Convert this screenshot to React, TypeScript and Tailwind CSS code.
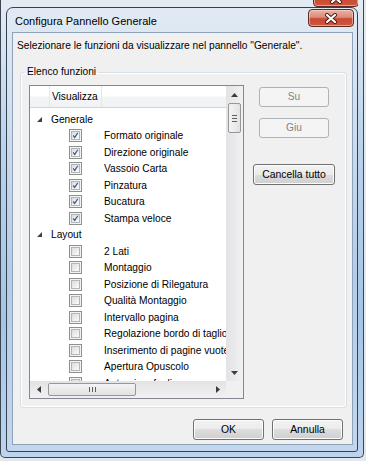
import React from 'react';

// One row of the feature tree: either a category header or a checkbox item.
type Row = { label: string; category?: boolean; checked?: boolean };

const rows: Row[] = [
  { label: 'Generale', category: true },
  { label: 'Formato originale', checked: true },
  { label: 'Direzione originale', checked: true },
  { label: 'Vassoio Carta', checked: true },
  { label: 'Pinzatura', checked: true },
  { label: 'Bucatura', checked: true },
  { label: 'Stampa veloce', checked: true },
  { label: 'Layout', category: true },
  { label: '2 Lati' },
  { label: 'Montaggio' },
  { label: 'Posizione di Rilegatura' },
  { label: 'Qualità Montaggio' },
  { label: 'Intervallo pagina' },
  { label: 'Regolazione bordo di taglio' },
  { label: 'Inserimento di pagine vuote' },
  { label: 'Apertura Opuscolo' },
  { label: 'Anteprima fogli' },
];

const CloseButton = () => (
  <div className="w-[46px] h-[18px] shrink-0 rounded-[4px] border border-[#5b2a24] bg-[linear-gradient(to_bottom,#eab3a6_0%,#dc8c79_45%,#c84a32_55%,#d0573b_100%)] shadow-[inset_0_0_0_1px_rgba(255,220,210,0.55)] flex items-center justify-center">
    <svg width="14" height="11" viewBox="0 0 14 11">
      <path d="M3 2 L11 9 M11 2 L3 9" stroke="#4a1a14" strokeWidth="4" strokeLinecap="round" />
      <path d="M3 2 L11 9 M11 2 L3 9" stroke="#ffffff" strokeWidth="2.2" strokeLinecap="round" />
    </svg>
  </div>
);

const Checkbox = ({ checked }: { checked?: boolean }) => (
  <div className="w-[13px] h-[13px] border border-[#8f8f8f] bg-[#f4f4f4] p-[1px]">
    <div className="w-full h-full border border-[#b5b5b5] bg-[linear-gradient(135deg,#dcdcdc,#fbfbfb)] flex items-center justify-center">
      {checked && (
        <svg width="9" height="9" viewBox="0 0 9 9">
          <path d="M1.5 4.5 L3.5 7 L7.5 1" stroke="#3d5a9c" strokeWidth="1.6" fill="none" />
        </svg>
      )}
    </div>
  </div>
);

const WinButton = ({ label, disabled, className }: { label: string; disabled?: boolean; className: string }) => (
  <div
    className={
      disabled
        ? `${className} rounded-[3px] border border-[#adb2b5] bg-[#f4f4f4] text-[#838383] flex items-center justify-center`
        : `${className} rounded-[3px] border border-[#707070] bg-[linear-gradient(to_bottom,#f2f2f2_0%,#ebebeb_50%,#dddddd_50%,#cfcfcf_100%)] shadow-[inset_0_0_0_1px_#fcfcfc] text-black flex items-center justify-center`
    }
  >
    {label}
  </div>
);

const Arrow = ({ dir }: { dir: 'up' | 'down' | 'left' | 'right' }) => {
  const d = {
    up: 'M0 4 L3.5 0 L7 4 Z',
    down: 'M0 0 L3.5 4 L7 0 Z',
    left: 'M4 0 L0 3.5 L4 7 Z',
    right: 'M0 0 L4 3.5 L0 7 Z',
  }[dir];
  const vertical = dir === 'up' || dir === 'down';
  return (
    <svg width={vertical ? 7 : 4} height={vertical ? 4 : 7} viewBox={vertical ? '0 0 7 4' : '0 0 4 7'}>
      <path d={d} fill="#3c3c3c" />
    </svg>
  );
};

export default function App() {
  return (
    <div className="w-[366px] h-[461px] bg-[#e2e8ee] overflow-hidden font-['Liberation_Sans',Arial,sans-serif] text-[10.2px] text-black">
      {/* window behind the dialog */}
      <div className="w-[364px] h-[458px] border-x border-b border-[#3b4654] rounded-b-[5px] bg-[linear-gradient(to_bottom,#e4ebf3_0%,#bcd3eb_30%,#a6c4e5_70%,#bcd4ee_100%)] px-[5px] pb-[5px]">
        <div className="h-[7px] flex justify-end overflow-hidden items-end">
          <div className="mr-[-1px]">
            <CloseButton />
          </div>
        </div>

        {/* dialog */}
        <div className="w-[352px] h-[445px] border border-[#36414f] rounded-t-[7px] rounded-b-[3px] bg-[linear-gradient(to_bottom,#e1eaf4_0%,#cfdeee_25%,#b3cce8_60%,#c2d7ed_100%)] flex flex-col">
          {/* title bar */}
          <div className="h-[24px] flex justify-between items-start">
            <div className="pl-[8px] pt-[7px] text-[11px] leading-[13px] text-black">Configura Pannello Generale</div>
            <div className="mt-[1px] mr-[3px]">
              <CloseButton />
            </div>
          </div>

          {/* client area */}
          <div className="ml-[5px] w-[341px] h-[413px] border border-[#8ea3b9] bg-[#f0f0f0] flex flex-col">
            <div className="pl-[4px] pt-[6px] leading-[14px]">
              Selezionare le funzioni da visualizzare nel pannello "Generale".
            </div>

            <fieldset className="mt-[12px] ml-[7px] w-[327px] h-[343px] border border-[#d5dfe5] rounded-[3px] shadow-[inset_0_0_0_1px_#ffffff]">
              <legend className="ml-[3px] px-[3px] leading-[14px]">Elenco funzioni</legend>
              <div className="flex">
                {/* list box */}
                <div className="ml-[8px] mt-[6px] w-[215px] h-[314px] border border-[#828790] bg-white flex flex-col">
                  <div className="flex h-[295px]">
                    <div className="w-[196px] overflow-hidden flex flex-col">
                      <div className="h-[22px] shrink-0 flex border-b border-[#d5d5d5] bg-[linear-gradient(to_bottom,#ffffff_0%,#ffffff_45%,#f3f4f6_55%,#f1f2f4_100%)]">
                        <div className="w-[20px] border-r border-[#e3e8ee]" />
                        <div className="w-[52px] border-r border-[#e3e8ee] pl-[2px] flex items-center">Visualizza</div>
                      </div>
                      <div className="pt-[3px] flex flex-col">
                        {rows.map((r, i) => (
                          <div key={i} className="h-[16.5px] shrink-0 flex items-center whitespace-nowrap">
                            {r.category ? (
                              <>
                                <div className="w-[21px] shrink-0 pl-[7px] flex items-center">
                                  <svg width="5" height="5" viewBox="0 0 5 5">
                                    <path d="M5 0 L5 5 L0 5 Z" fill="#404040" />
                                  </svg>
                                </div>
                                <span>{r.label}</span>
                              </>
                            ) : (
                              <>
                                <div className="w-[74px] shrink-0 pl-[39px]">
                                  <Checkbox checked={r.checked} />
                                </div>
                                <span className="shrink-0">{r.label}</span>
                              </>
                            )}
                          </div>
                        ))}
                      </div>
                    </div>
                    {/* vertical scrollbar */}
                    <div className="w-[17px] bg-[linear-gradient(to_right,#e3e3e6,#f1f1f3)] flex flex-col items-center">
                      <div className="h-[17px] flex items-center justify-center">
                        <Arrow dir="up" />
                      </div>
                      <div className="w-[13px] h-[30px] rounded-[2px] border border-[#979797] bg-[linear-gradient(to_right,#f4f4f4,#e2e2e2)] flex flex-col items-center justify-center gap-[2px]">
                        <div className="w-[5px] h-px bg-[#5f5f5f]" />
                        <div className="w-[5px] h-px bg-[#5f5f5f]" />
                        <div className="w-[5px] h-px bg-[#5f5f5f]" />
                      </div>
                      <div className="flex-1" />
                      <div className="h-[17px] flex items-center justify-center">
                        <Arrow dir="down" />
                      </div>
                    </div>
                  </div>
                  <div className="flex h-[17px]">
                    {/* horizontal scrollbar */}
                    <div className="w-[196px] bg-[linear-gradient(to_bottom,#e3e3e6,#f1f1f3)] flex items-center">
                      <div className="w-[17px] flex justify-center">
                        <Arrow dir="left" />
                      </div>
                      <div className="ml-[1px] w-[88px] h-[13px] rounded-[2px] border border-[#979797] bg-[linear-gradient(to_bottom,#f4f4f4,#e2e2e2)] flex items-center justify-center gap-[2px]">
                        <div className="w-px h-[5px] bg-[#5f5f5f]" />
                        <div className="w-px h-[5px] bg-[#5f5f5f]" />
                        <div className="w-px h-[5px] bg-[#5f5f5f]" />
                      </div>
                      <div className="flex-1" />
                      <div className="w-[17px] flex justify-center">
                        <Arrow dir="right" />
                      </div>
                    </div>
                    <div className="w-[17px] bg-[#f0f0f0]" />
                  </div>
                </div>

                {/* side buttons */}
                <div className="flex-1 flex flex-col items-center pt-[8px] pr-[2px]">
                  <WinButton label="Su" disabled className="w-[70px] h-[20px]" />
                  <WinButton label="Giu" disabled className="mt-[11px] w-[70px] h-[20px]" />
                  <WinButton label="Cancella tutto" className="mt-[26px] w-[82px] h-[21px] text-[10.4px]" />
                </div>
              </div>
            </fieldset>

            <div className="mt-[11px] mr-[9px] flex justify-end gap-[8px] text-[10.4px]">
              <WinButton label="OK" className="w-[71px] h-[21px]" />
              <WinButton label="Annulla" className="w-[71px] h-[21px]" />
            </div>
          </div>
        </div>
      </div>
    </div>
  );
}
